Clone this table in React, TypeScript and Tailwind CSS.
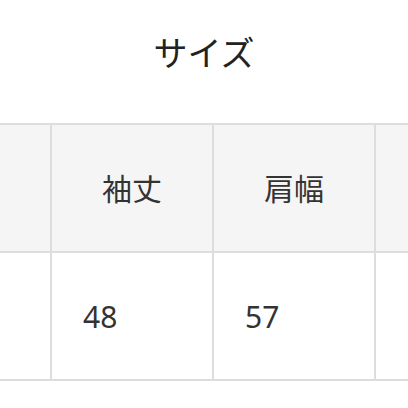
import React from "react";

const font = { fontFamily: '"Noto Sans", "Noto Sans CJK JP", sans-serif' };

export default function App() {
  const headers = ["", "袖丈", "肩幅", ""];
  const values = ["", "48", "57", ""];
  return (
    <div
      className="w-[408px] h-[408px] overflow-hidden bg-white"
      style={font}
    >
      <div className="h-[123px] pt-[33px] text-center text-[34px] leading-[40px] text-[#222]">
        サイズ
      </div>
      <div className="ml-[-112px] w-[652px] bg-[#dddddd] p-[2px] grid grid-cols-[160px_160px_160px_160px] grid-rows-[126px_126px] gap-[2px]">
        {headers.map((h, i) => (
          <div
            key={"h" + i}
            className="bg-[#f5f5f5] flex items-center justify-center text-[30px] text-[#333]"
          >
            {h}
          </div>
        ))}
        {values.map((v, i) => (
          <div
            key={"v" + i}
            className="bg-white flex items-center pl-[31px] text-[30px] text-[#333]"
          >
            {v}
          </div>
        ))}
      </div>
    </div>
  );
}
